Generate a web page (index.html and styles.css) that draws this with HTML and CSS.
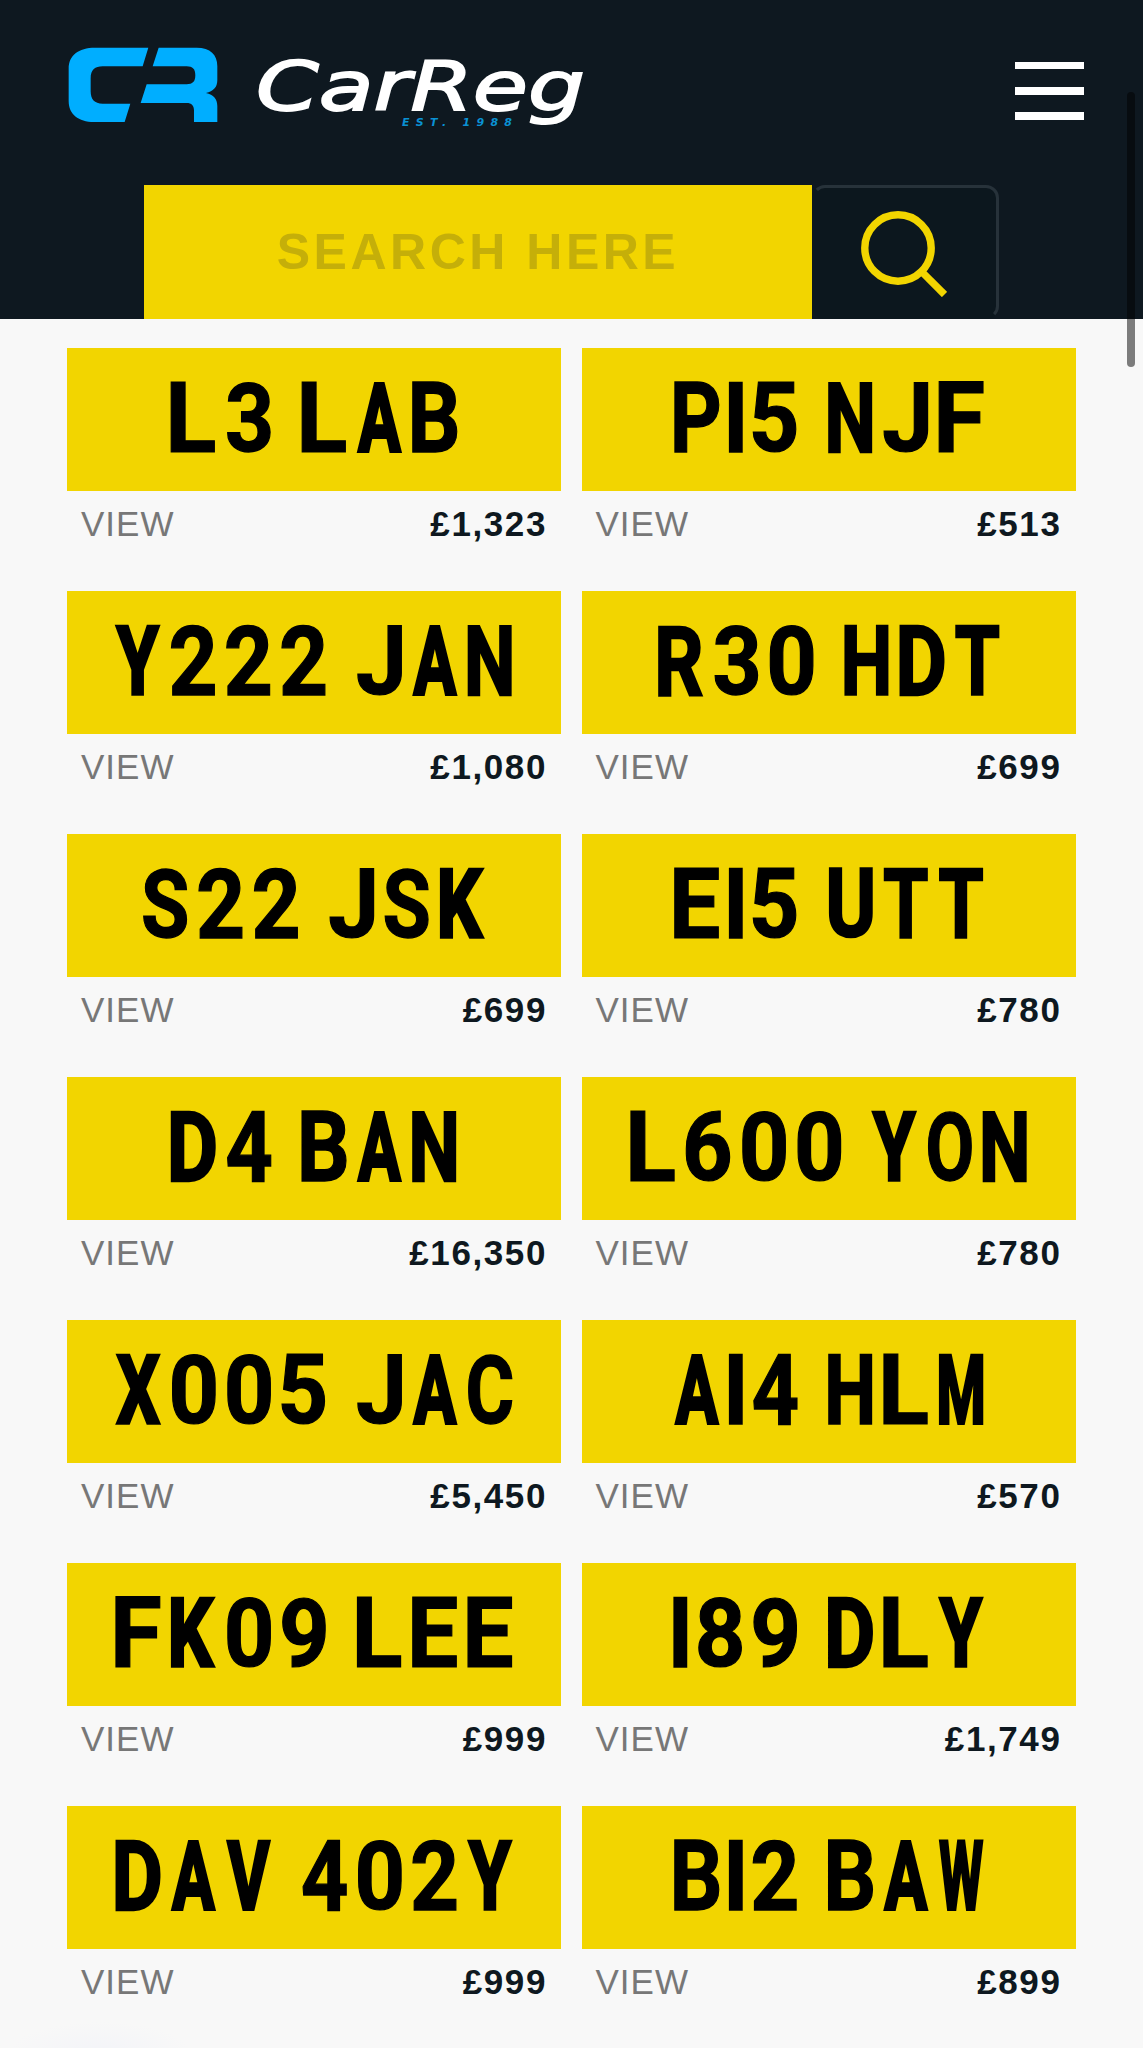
FILE: index.html
```html
<!DOCTYPE html>
<html lang="en">
<head>
    <meta charset="utf-8">
    <title>CarReg - Private Number Plates</title>
    <link rel="stylesheet" href="styles.css">
</head>

<body>

    <header class="header">
        <div class="topbar">
            <svg class="logo" viewBox="60 40 530 95" role="img" aria-label="CarReg">
                <g class="logo-mark" transform="translate(50 30) scale(.3333)">
                    <path d="M295 53 L135 53 C85 53 56 76 56 116 L56 213 C56 253 85 276 132 276 L224 276 L241 221 L158 221 C133 221 122 208 122 184 L122 145 C122 120 135 109 158 109 L278 109 Z"/>
                    <path d="M326 53 L440 53 C481 53 502 74 502 108 L502 150 C502 172 490 184 468 189 C491 194 502 207 502 228 L502 276 L432 276 L432 241 C432 227 425 219 410 219 L272 219 L290 163 L410 163 C428 163 436 155 436 136 C436 117 428 109 410 109 L308 109 Z"/>
                </g>
                <text class="logo-name" x="256" y="110" textLength="329" lengthAdjust="spacingAndGlyphs">CarReg</text>
                <text class="logo-est" x="402" y="126" textLength="110">EST. 1988</text>
            </svg>
            <button class="menu" aria-label="Menu">
                <span></span>
                <span></span>
                <span></span>
            </button>
        </div>
        <form class="search">
            <input class="search-input" type="text" placeholder="SEARCH HERE">
            <button class="search-btn" type="button" aria-label="Search">
                <svg class="search-icon" viewBox="0 0 86 86">
                    <circle cx="37" cy="37" r="33.2"/>
                    <path d="M61 61 L83.5 83.5"/>
                </svg>
            </button>
        </form>
    </header>

    <main class="plates" id="plates"></main>

    <div class="scrollbar"></div>

    <script src="plates.js"></script>

</body>
</html>
```
FILE: styles.css
```css
body {
    margin: 0;
    height: 2048px;
    overflow: hidden;
    color: #0e1820;
    background: radial-gradient(ellipse 90px 30px at 100px 2052px, #f3f4f8, #f8f8f8);
    font-family: "Liberation Sans", Arial, sans-serif;
}

.header {
    box-sizing: border-box;
    height: 319px;
    padding-top: 40px;
    background: #0e1820;
}

.topbar {
    display: flex;
    justify-content: space-between;
    align-items: flex-start;
    height: 145px;
    padding: 0 59px 0 60px;
}

.logo {
    width: 530px;
    height: 95px;
}

.logo-mark {
    fill: #00aeff;
}

.logo-name {
    fill: #fff;
    stroke: #fff;
    stroke-width: 1.8px;
    font: italic 67px "DejaVu Sans", sans-serif;
}

.logo-est {
    fill: #0a91d3;
    font: italic bold 11px "DejaVu Sans", sans-serif;
}

.menu {
    display: flex;
    flex-direction: column;
    gap: 17.5px;
    margin-top: 21.5px;
    padding: 0;
    border: 0;
    background: none;
}

    .menu span {
        width: 69px;
        height: 7.8px;
        background: #fff;
    }

.search {
    display: flex;
    height: 134px;
    margin: 0 144px;
}

.search-input {
    box-sizing: border-box;
    width: 668px;
    height: 134px;
    padding: 0;
    border: 0;
    border-radius: 0;
    background: #f2d500;
    font: bold 50px "Liberation Sans", Arial, sans-serif;
    letter-spacing: 3.5px;
    text-align: center;
}

    .search-input::placeholder {
        color: #c5af09;
        opacity: 1;
    }

.search-btn {
    display: flex;
    align-items: flex-start;
    box-sizing: border-box;
    width: 187px;
    height: 134px;
    padding: 24px 0 0 46px;
    border: 3px solid #27323a;
    border-left-color: transparent;
    border-bottom-color: transparent;
    border-radius: 13px;
    background: #0c171e;
}

.search-icon {
    width: 86px;
    height: 86px;
    margin-top: -1px;
    fill: none;
    stroke: #f2d500;
    stroke-width: 7.4;
}

.plates {
    display: grid;
    grid-template-columns: 494px 494px;
    grid-auto-rows: 243px;
    column-gap: 20.5px;
    padding: 28.6px 67px 0;
}

.plate {
    display: block;
    width: 100%;
    height: 143px;
    background: #f2d500;
    fill: #000;
    stroke: #000;
    font: bold 101px Roboto, "Liberation Sans", sans-serif;
}

    .plate text {
        vector-effect: non-scaling-stroke;
    }

.info {
    display: flex;
    justify-content: space-between;
    padding: 13px 14px 0 14px;
    font-size: 35px;
    line-height: 40px;
}

.view {
    color: #777;
    letter-spacing: 1px;
}

.price {
    font-weight: bold;
    letter-spacing: 1.6px;
}

.scrollbar {
    position: absolute;
    top: 92px;
    right: 8px;
    width: 8px;
    height: 275px;
    border-radius: 4px;
    background: rgba(0, 0, 0, .5);
}
```
FILE: plates.js
```js
const plates = [
    ["L3 LAB", "£1,323"], ["P15 NJF", "£513"],
    ["Y222 JAN", "£1,080"], ["R30 HDT", "£699"],
    ["S22 JSK", "£699"], ["E15 UTT", "£780"],
    ["D4 BAN", "£16,350"], ["L600 YON", "£780"],
    ["X005 JAC", "£5,450"], ["A14 HLM", "£570"],
    ["FK09 LEE", "£999"], ["189 DLY", "£1,749"],
    ["DAV 402Y", "£999"], ["B12 BAW", "£899"]
];

// every character on a plate is the same size, except the 1 which is a bar
const CHAR_W = 45.4;
const CHAR_H = 71.7;
const BAR_W = 13;
const GAP = 9.9;
const SPACE = 20.3;
const PLATE_W = 494;
const BASELINE = 104.9;

// measured at 10x, the boxes come back in whole pixels
const ctx = document.createElement("canvas").getContext("2d");
ctx.font = 'bold 1010px Roboto, "Liberation Sans", sans-serif';

function measure(glyph) {
    const m = ctx.measureText(glyph);
    return {
        left: m.actualBoundingBoxLeft / 10,
        right: m.actualBoundingBoxRight / 10,
        up: m.actualBoundingBoxAscent / 10,
        down: m.actualBoundingBoxDescent / 10
    };
}

function charWidth(c) {
    if (c == " ") return SPACE - GAP;
    return c == "1" ? BAR_W : CHAR_W;
}

function strokeFor(c) {
    if ("1AVWMXYK".includes(c)) return 3.2;
    return "TNHDRU".includes(c) ? 2.2 : 1.2;
}

function drawPlate(reg) {
    let total = -GAP;
    for (const c of reg) total += charWidth(c) + GAP;

    let x = (PLATE_W - total) / 2;
    let out = "";
    for (const c of reg) {
        const w = charWidth(c);
        if (c != " ") {
            const glyph = c == "1" ? "I" : c;
            const s = strokeFor(c);
            // the bar keeps its full width under the stroke
            const inset = c == "1" ? 0 : s;
            const m = measure(glyph);
            const sx = (w - inset) / (m.right + m.left);
            const sy = (CHAR_H - s) / (m.up + m.down);
            const tx = x + inset / 2 + m.left * sx;
            const ty = BASELINE - s / 2 - m.down * sy;
            out += `<text transform="translate(${tx} ${ty}) scale(${sx} ${sy})" stroke-width="${s}">${glyph}</text>`;
        }
        x += w + GAP;
    }
    return `<svg class="plate" viewBox="0 0 494 143" role="img" aria-label="${reg}">${out}</svg>`;
}

document.getElementById("plates").innerHTML = plates.map(([reg, price]) => `
    <div class="item">
        ${drawPlate(reg)}
        <div class="info">
            <span class="view">VIEW</span>
            <span class="price">${price}</span>
        </div>
    </div>`).join("");
```
